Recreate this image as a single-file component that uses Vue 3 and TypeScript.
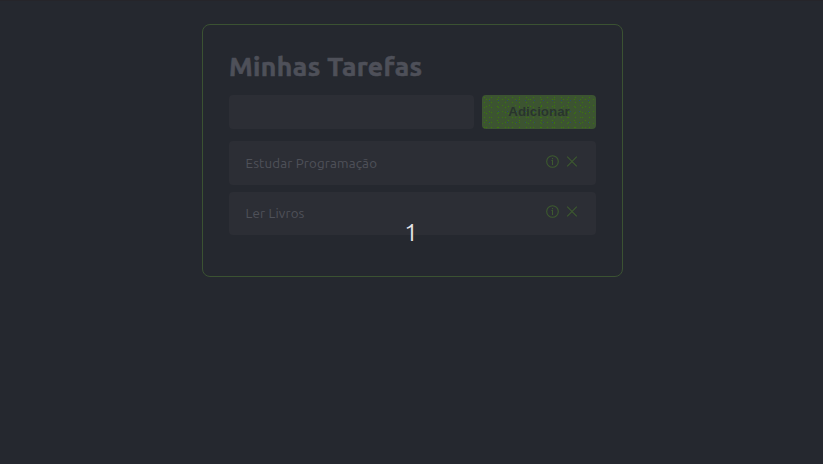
<script setup lang="ts">
import { ref } from 'vue'

interface Task {
  id: number
  name: string
}

const draft = ref('')
const count = ref(1)
const tasks = ref<Task[]>([
  { id: 1, name: 'Estudar Programação' },
  { id: 2, name: 'Ler Livros' },
])

function addTask() {
  const name = draft.value.trim()
  if (!name) return
  tasks.value.push({ id: Date.now(), name })
  draft.value = ''
}

function removeTask(id: number) {
  tasks.value = tasks.value.filter((task) => task.id !== id)
}
</script>

<template>
  <div class="page">
    <main class="card">
      <h1 class="title">Minhas Tarefas</h1>
      <form class="form" @submit.prevent="addTask">
        <input v-model="draft" class="field" type="text" />
        <button class="add" type="submit">Adicionar</button>
      </form>
      <ul class="list">
        <li v-for="task in tasks" :key="task.id" class="task">
          <span class="name">{{ task.name }}</span>
          <span class="actions">
            <button class="icon" type="button">
              <svg width="13" height="13" viewBox="0 0 13 13" fill="none" stroke="currentColor" stroke-width="1.1">
                <circle cx="6.5" cy="6.5" r="5.8" />
                <path d="M6.5 3v1.3M5.4 5.5h1.1v4.4" />
              </svg>
            </button>
            <button class="icon" type="button" @click="removeTask(task.id)">
              <svg width="12" height="11" viewBox="0 0 12 11" fill="none" stroke="currentColor" stroke-width="1.1">
                <path d="M1.2 .7l9.6 9.6M10.8 .7L1.2 10.3" />
              </svg>
            </button>
          </span>
        </li>
      </ul>
    </main>
    <div class="overlay">{{ count }}</div>
  </div>
</template>

<style>
body {
  background: #25282f;
}
</style>

<style scoped>
.page {
  position: relative;
  box-sizing: border-box;
  height: 464px;
  padding-top: 23px;
  padding-left: 202px;
  border-top: 1px solid #26252a;
  background: #25282f;
  font-family: Ubuntu, 'Noto Sans', sans-serif;
}

.card {
  box-sizing: border-box;
  width: 421px;
  height: 253px;
  padding: 25px 26px;
  border: 1px solid #3b5232;
  border-radius: 8px;
}

.title {
  margin: 0;
  height: 45px;
  color: #4e5059;
  font-size: 26.67px;
  font-weight: 700;
  line-height: 32px;
  letter-spacing: 0.37px;
  white-space: nowrap;
  -webkit-text-stroke: 0.6px #4e5059;
}

.form {
  display: flex;
  gap: 8px;
  margin-bottom: 12px;
}

.field {
  box-sizing: border-box;
  width: 245px;
  height: 34px;
  padding: 0 12px;
  border: 0;
  border-radius: 4px;
  outline: 0;
  background: #2c2e35;
  color: #4c4e57;
}

.add {
  flex: 1;
  height: 34px;
  padding: 0 0 2px;
  border: 0;
  border-radius: 4px;
  background:
    radial-gradient(circle at 2.5px 2.5px, #3a7a08 0.6px, transparent 0.9px) 0 0 / 7px 5px,
    radial-gradient(circle at 3.5px 2.5px, #3a7a08 0.6px, transparent 0.9px) 1px 2px / 11px 7px,
    radial-gradient(circle at 5.5px 3.5px, #3a7410 0.6px, transparent 0.9px) 2px 1px / 13px 6px,
    radial-gradient(circle at 4.5px 4.5px, #2a4c68 0.6px, transparent 0.9px) 3px 1px / 9px 11px,
    #3c5431;
  color: #29342d;
  font-family: 'Liberation Sans', sans-serif;
  font-size: 13.33px;
  font-weight: 700;
}

.list {
  display: flex;
  flex-direction: column;
  gap: 7px;
  margin: 0;
  padding: 0;
  list-style: none;
}

.task {
  display: flex;
  align-items: flex-start;
  justify-content: space-between;
  box-sizing: border-box;
  height: 44px;
  padding: 13px 18px 0 16.5px;
  border-radius: 4px;
  background: #2c2e35;
}

.task:last-child {
  height: 43px;
  padding-top: 12px;
}

.name {
  padding-top: 1px;
  color: #4f5159;
  font-size: 13.33px;
  line-height: 18px;
  letter-spacing: 0.17px;
}

.actions {
  display: flex;
  align-items: center;
  gap: 7px;
  padding-top: 1px;
}

.icon {
  display: flex;
  padding: 0;
  border: 0;
  background: none;
  color: #3d5a2f;
}

.overlay {
  position: absolute;
  top: 216px;
  left: 404px;
  width: 14px;
  color: #e4e5e8;
  font-size: 24px;
  line-height: 32px;
  text-align: center;
}
</style>
